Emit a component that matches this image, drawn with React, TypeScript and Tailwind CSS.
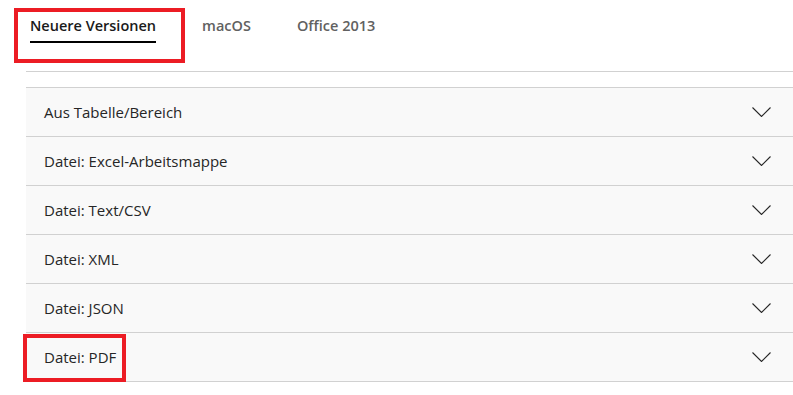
const tabs = ["Neuere Versionen", "macOS", "Office 2013"];

const rows = [
  "Aus Tabelle/Bereich",
  "Datei: Excel-Arbeitsmappe",
  "Datei: Text/CSV",
  "Datei: XML",
  "Datei: JSON",
  "Datei: PDF",
];

function Chevron() {
  return (
    <svg width="19" height="10" viewBox="0 0 19 10" fill="none" className="shrink-0">
      <path d="M0.5 0.5l9 9 9-9" stroke="#262626" strokeWidth="1.1" />
    </svg>
  );
}

export default function App() {
  return (
    <div
      className="relative h-[395px] w-[793px] overflow-hidden bg-white text-[#262626]"
      style={{ fontFamily: '"Open Sans", "Noto Sans", Arial, sans-serif' }}
    >
      <div className="flex h-[71px] items-start gap-[46px] pl-[30px] pt-[15px]">
        {tabs.map((tab, i) => (
          <div key={tab} className="flex flex-col">
            <span
              className={
                i === 0
                  ? "text-[14.5px] font-semibold leading-[22px] text-[#1a1a1a]"
                  : "text-[14.5px] font-semibold leading-[22px] text-[#616161]"
              }
            >
              {tab}
            </span>
            {i === 0 ? <span className="mt-[4px] h-[2px] bg-black" /> : null}
          </div>
        ))}
      </div>

      <div className="ml-[26px] border-t border-[#d1d1d1]">
        <div className="mt-[15px] border-t border-[#d1d1d1] bg-[#f9f9f9]">
          {rows.map((row) => (
            <div
              key={row}
              className="flex h-[49px] items-center justify-between border-b border-[#d1d1d1] pl-[18px] pr-[22px]"
            >
              <span className="text-[15px] leading-5">{row}</span>
              <Chevron />
            </div>
          ))}
        </div>
      </div>

      {/* annotation boxes */}
      <div className="pointer-events-none absolute left-[14px] top-[8px] h-[55px] w-[171px] border-[4.5px] border-[#ec1c24]" />
      <div className="pointer-events-none absolute left-[23px] top-[334px] h-[48px] w-[103px] border-[4.5px] border-[#ec1c24]" />
    </div>
  );
}
